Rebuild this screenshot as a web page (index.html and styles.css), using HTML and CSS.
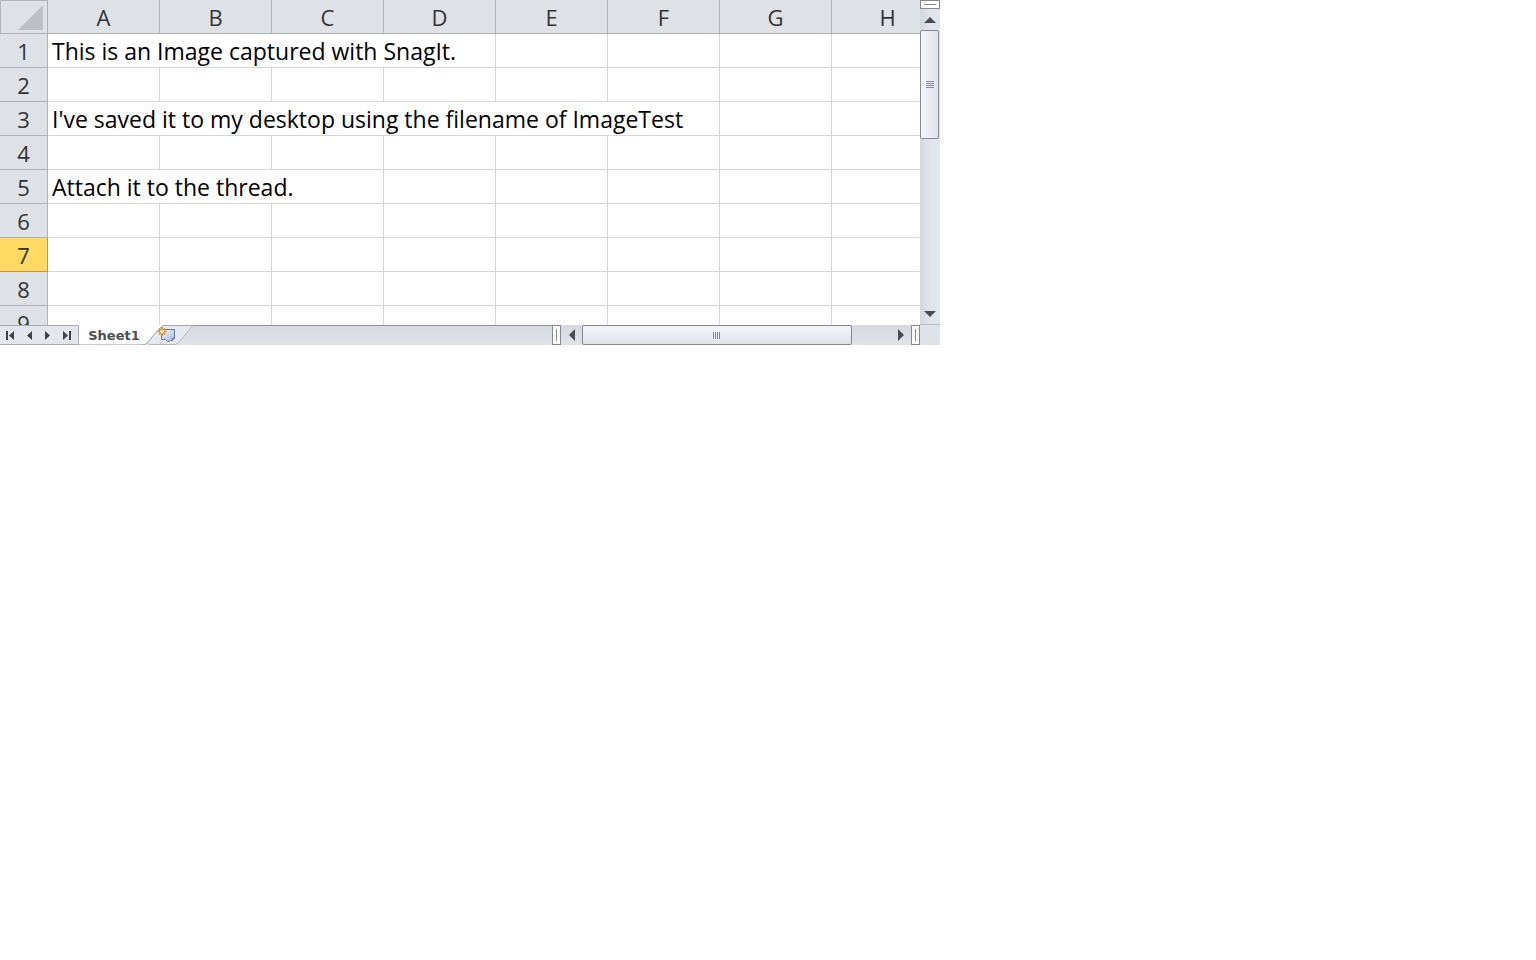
FILE: index.html
```html
<!DOCTYPE html>
<html lang="en">
<head>
    <meta charset="utf-8">
    <title>Sheet1</title>
    <link rel="stylesheet" href="styles.css">
</head>
<body>
    <div class="workbook">
        <div class="grid-view">
            <table class="sheet">
                <colgroup>
                    <col class="col-rows">
                    <col span="8" class="col-cells">
                </colgroup>
                <tr>
                    <th class="corner">
                        <svg width="47" height="33" viewBox="0 0 47 33" aria-hidden="true">
                            <path d="M0.5 33V0.5H47" fill="none" stroke="#b1b5ba"/>
                            <path d="M43 5V30H18z" fill="#bcc0c4"/>
                        </svg>
                    </th>
                    <th scope="col">A</th><th scope="col">B</th><th scope="col">C</th><th scope="col">D</th>
                    <th scope="col">E</th><th scope="col">F</th><th scope="col">G</th><th scope="col">H</th>
                </tr>
                <tr><th scope="row">1</th><td colspan="4">This is an Image captured with SnagIt.</td><td></td><td></td><td></td><td></td></tr>
                <tr><th scope="row">2</th><td></td><td></td><td></td><td></td><td></td><td></td><td></td><td></td></tr>
                <tr><th scope="row">3</th><td colspan="6">I've saved it to my desktop using the filename of ImageTest</td><td></td><td></td></tr>
                <tr><th scope="row">4</th><td></td><td></td><td></td><td></td><td></td><td></td><td></td><td></td></tr>
                <tr><th scope="row">5</th><td colspan="3">Attach it to the thread.</td><td></td><td></td><td></td><td></td><td></td></tr>
                <tr><th scope="row">6</th><td></td><td></td><td></td><td></td><td></td><td></td><td></td><td></td></tr>
                <tr class="active"><th scope="row">7</th><td></td><td></td><td></td><td></td><td></td><td></td><td></td><td></td></tr>
                <tr><th scope="row">8</th><td></td><td></td><td></td><td></td><td></td><td></td><td></td><td></td></tr>
                <tr><th scope="row">9</th><td></td><td></td><td></td><td></td><td></td><td></td><td></td><td></td></tr>
            </table>
        </div>

        <div class="vscroll">
            <div class="split split-h"></div>
            <button class="arrow" aria-label="Scroll up">
                <svg width="12" height="6" viewBox="0 0 12 6"><path d="M6 0L12 6H0z"/></svg>
            </button>
            <div class="vthumb">
                <svg width="8" height="8" viewBox="0 0 8 8"><path d="M0 0.5H8M0 2.5H8M0 4.5H8M0 6.5H8"/></svg>
            </div>
            <div class="space"></div>
            <button class="arrow" aria-label="Scroll down">
                <svg width="12" height="6" viewBox="0 0 12 6"><path d="M0 0H12L6 6z"/></svg>
            </button>
        </div>

        <div class="bottom-bar">
            <div class="sheet-nav">
                <button aria-label="First sheet"><svg width="9" height="9" viewBox="0 0 9 9"><path d="M0 0H2V9H0zM8 0V9L3 4.500z"/></svg></button>
                <button aria-label="Previous sheet"><svg width="9" height="9" viewBox="0 0 9 9"><path d="M7 0V9L2 4.500z"/></svg></button>
                <button aria-label="Next sheet"><svg width="9" height="9" viewBox="0 0 9 9"><path d="M1 0V9L6 4.500z"/></svg></button>
                <button aria-label="Last sheet"><svg width="9" height="9" viewBox="0 0 9 9"><path d="M6 0H8V9H6zM0 0V9L5 4.500z"/></svg></button>
            </div>
            <button class="tab">Sheet1</button>
            <button class="new-sheet" aria-label="Insert worksheet">
                <svg width="52" height="20" viewBox="0 0 52 20">
                    <defs>
                        <linearGradient id="page" x1="0" y1="0" x2="1" y2="1">
                            <stop offset="0" stop-color="#ffffff"/>
                            <stop offset="1" stop-color="#9fb4e0"/>
                        </linearGradient>
                    </defs>
                    <path d="M0 0H20L3 19H0z" fill="#fff"/>
                    <path d="M20 0.500H50L34 19.500H6L4 17z" fill="#e6e9ef"/>
                    <path d="M0 19.500H1Q3 19.500 5 17L17 3Q19 0.500 22 0.500H52" fill="none" stroke="#a5a9b0"/>
                    <path d="M4.500 17.500Q5 19.500 7 19.500H32Q34 19.500 36 17L47 4Q49 1 51 0.500" fill="none" stroke="#b4b8be"/>
                    <path d="M16.500 4.500H31.500V13.500L29.500 15.500H27.500L26.500 16.500H24.500L22.500 14.500H18.500V8z" fill="url(#page)" stroke="#5c70a4"/>
                    <path d="M29.500 15.500V13.500H31.500" fill="#dfe7f8" stroke="#5c70a4"/>
                    <path d="M19 2V11M14.500 6.500H23.500M16 3.500L22 9.500M22 3.500L16 9.500" stroke="#dc8420" stroke-width="1.500"/>
                    <circle cx="19" cy="6.500" r="2" fill="#fff1a8"/>
                </svg>
            </button>
            <div class="space top-line"></div>
            <div class="hscroll">
                <div class="split split-v"></div>
                <button class="arrow" aria-label="Scroll left">
                    <svg width="6" height="12" viewBox="0 0 6 12"><path d="M6 0V12L0 6z"/></svg>
                </button>
                <div class="hthumb">
                    <svg width="8" height="7" viewBox="0 0 8 7"><path d="M0.500 0V7M2.500 0V7M4.500 0V7M6.500 0V7"/></svg>
                </div>
                <div class="htrack"></div>
                <button class="arrow" aria-label="Scroll right">
                    <svg width="6" height="12" viewBox="0 0 6 12"><path d="M0 0V12L6 6z"/></svg>
                </button>
                <div class="split split-v"></div>
            </div>
        </div>
        <div class="bar-corner"></div>
    </div>
</body>
</html>
```
FILE: styles.css
```css
body {
    margin: 0;
    background-color: #fff;
    font-family: "Open Sans", sans-serif;
}
button {
    display: flex;
    align-items: center;
    justify-content: center;
    margin: 0;
    padding: 0;
    border: none;
    background: none;
}
svg {
    display: block;
}
.workbook {
    display: grid;
    grid-template-columns: minmax(0, 1fr) 20px;
    grid-template-rows: 325px 20px;
    max-width: 940px;
}
.grid-view {
    overflow: hidden;
}

/* Cells */
.sheet {
    table-layout: fixed;
    width: 944px;
    border-spacing: 0;
    font-size: 23px;
    line-height: 31px;
}
.col-rows {
    width: 48px;
}
.col-cells {
    width: 112px;
}
.sheet th,
.sheet td {
    box-sizing: border-box;
    height: 34px;
    padding: 2px 0 0;
    border-right: 1px solid #d6d7d9;
    border-bottom: 1px solid #d6d7d9;
    white-space: nowrap;
}
.sheet td {
    padding-left: 4px;
    color: #000;
}
.sheet th {
    border-color: #adb1b8;
    background-color: #dee1e6;
    color: #333;
    font-size: 22px;
    font-weight: normal;
}
.sheet .corner {
    padding: 0;
}
.sheet .active th {
    border-color: #c09545;
    background-color: #ffd963;
}

/* Scroll bars */
.space {
    flex: 1;
}
.arrow {
    flex: none;
    fill: #484b50;
}
.split {
    box-sizing: border-box;
    flex: none;
    border: 1px solid #85898f;
    background-color: #fff;
}
.split::before {
    content: "";
    display: block;
    background-color: #85898f;
}
.split-h {
    height: 9px;
    padding: 3px;
}
.split-h::before {
    height: 1px;
}
.split-v {
    width: 9px;
    padding: 3px;
}
.split-v::before {
    width: 1px;
    height: 100%;
}
.vscroll {
    display: flex;
    flex-direction: column;
    border-bottom: 1px solid #b9bdc4;
    background: linear-gradient(to right, #d2d7de, #e0e4eb 50%);
}
.vscroll .arrow {
    height: 21px;
    width: 19px;
}
.vthumb,
.hthumb {
    box-sizing: border-box;
    display: flex;
    align-items: center;
    justify-content: center;
    border: 1px solid #858a94;
    border-radius: 2px;
    stroke: #858a91;
}
.vthumb {
    width: 19px;
    height: 109px;
    background: linear-gradient(to right, #f3f5f9, #dfe3ec);
}
.hscroll {
    display: flex;
    width: 40%;
}
.hthumb {
    flex: 7;
    background: linear-gradient(#f3f5f9, #dfe3ec);
}
.htrack {
    flex: 1;
}

/* Sheet tabs */
.bottom-bar {
    display: flex;
    background: linear-gradient(#d5dae0, #e0e4ea);
}
.sheet-nav {
    box-sizing: border-box;
    display: flex;
    align-items: center;
    justify-content: space-around;
    width: 79px;
    padding: 0 1px;
    border: 1px solid #a5a9b0;
    border-left: none;
    background-color: #e3e7ed;
    fill: #3f4349;
}
.tab {
    box-sizing: border-box;
    width: 64px;
    padding: 2px 0 0 6px;
    border-bottom: 1px solid #c5c8cd;
    background-color: #fff;
    color: #4a4d52;
    font: bold 13px "DejaVu Sans", sans-serif;
}
.top-line {
    border-top: 1px solid #8e9298;
}
.bottom-bar .arrow {
    width: 21px;
}
.bar-corner {
    background-color: #dee2e9;
}
```
